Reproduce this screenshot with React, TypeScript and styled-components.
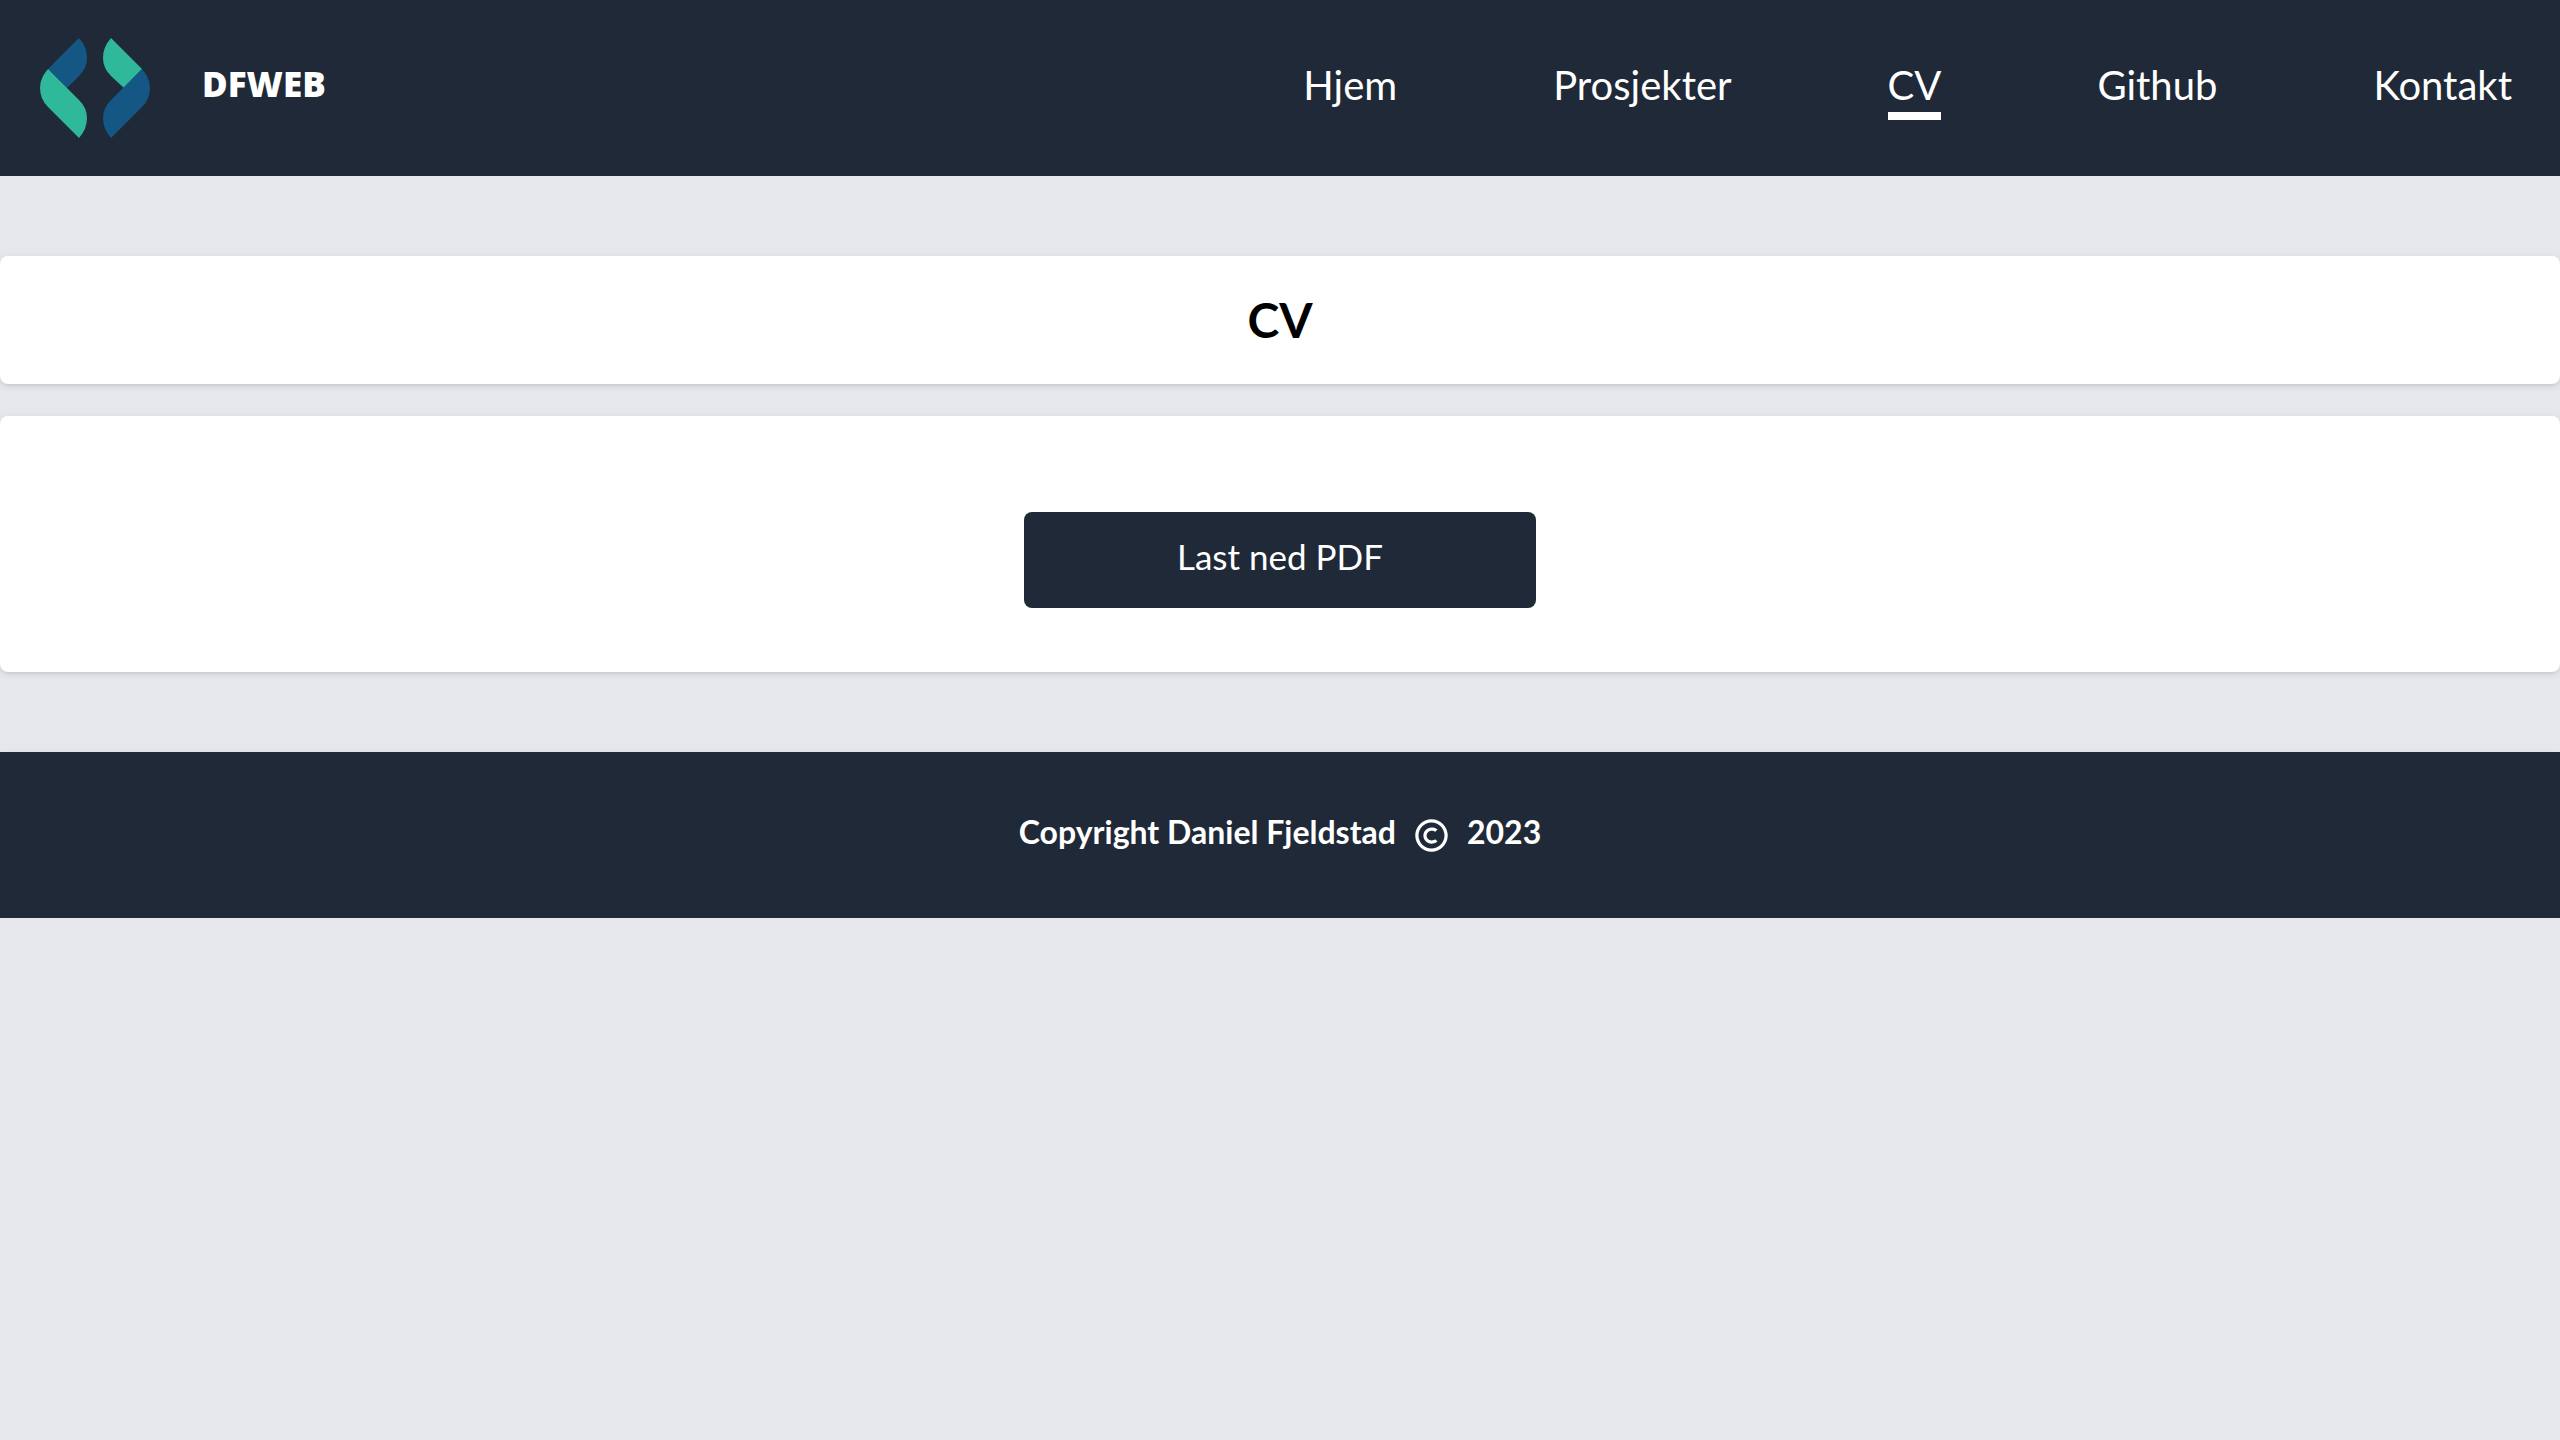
import React from "react";
import styled, { createGlobalStyle } from "styled-components";
import { BiCopyright } from "react-icons/bi";

const GlobalStyle = createGlobalStyle`
  *, *::before, *::after { box-sizing: border-box; }
  body {
    margin: 0;
    background: #e5e7eb;
    font-family: Lato, "Open Sans", sans-serif;
  }
`;

const Header = styled.header`
  display: flex;
  align-items: center;
  justify-content: space-between;
  height: 176px;
  padding: 0 48px 0 40px;
  background: #1f2937;
`;

const Brand = styled.a`
  display: flex;
  align-items: center;
  gap: 50px;
  color: #fff;
  text-decoration: none;
`;

const BrandName = styled.span`
  padding-bottom: 8px;
  font: 800 35px/40px "Open Sans", Lato, sans-serif;
`;

const Nav = styled.nav`
  display: flex;
  gap: 156px;
`;

const NavLink = styled.a<{ $active?: boolean }>`
  padding-top: 2px;
  border-bottom: 8px solid ${(p) => (p.$active ? "#fff" : "transparent")};
  color: #fff;
  font-size: 40px;
  line-height: 54px;
  text-decoration: none;
`;

const Main = styled.main`
  display: flex;
  flex-direction: column;
  gap: 32px;
  padding: 80px 0;
`;

const Card = styled.section<{ $pad: string }>`
  display: flex;
  justify-content: center;
  padding: ${(p) => p.$pad};
  border-radius: 8px;
  background: #fff;
  box-shadow: 0 2px 6px rgba(0, 0, 0, 0.1), 0 2px 4px -2px rgba(0, 0, 0, 0.1);
`;

const Title = styled.h1`
  margin: 0;
  color: #000;
  font-size: 48px;
  font-weight: 700;
  line-height: 64px;
`;

const Download = styled.button`
  width: 20%;
  padding: 16px 32px 24px;
  border: 0;
  border-radius: 8px;
  background: #1f2937;
  color: #fff;
  font-family: inherit;
  font-size: 35px;
  line-height: 56px;
`;

const Footer = styled.footer`
  display: flex;
  justify-content: center;
  align-items: center;
  gap: 16px;
  padding: 56px 32px 62px;
  background: #1f2937;
  box-shadow: 0 2px 6px rgba(0, 0, 0, 0.1), 0 2px 4px -2px rgba(0, 0, 0, 0.1);
  color: #fff;
  font-size: 32px;
  font-weight: 700;
  line-height: 48px;

  svg {
    margin-top: 6px;
  }
`;

const links = ["Hjem", "Prosjekter", "CV", "Github", "Kontakt"];

const Logo = () => (
  <svg width="112" height="100" viewBox="0 0 112 100" aria-hidden="true">
    <path d="M39 0Q47 9 47 20Q47 30 39 38L27 50L8 31Z" fill="#145684" />
    <path d="M8 31L39 62Q47 70 47 80Q47 91 39 100L8 69Q0 61 0 50Q0 40 8 31Z" fill="#2fb89a" />
    <path d="M71 0Q63 9 63 20Q63 30 71 38L84 50L102 31Z" fill="#2fb89a" />
    <path d="M102 31L71 62Q63 70 63 80Q63 91 71 100L102 69Q110 61 110 50Q110 40 102 31Z" fill="#145684" />
  </svg>
);

export default function App() {
  return (
    <>
      <GlobalStyle />
      <Header>
        <Brand href="#">
          <Logo />
          <BrandName>DFWEB</BrandName>
        </Brand>
        <Nav>
          {links.map((label) => (
            <NavLink key={label} href="#" $active={label === "CV"}>
              {label}
            </NavLink>
          ))}
        </Nav>
      </Header>
      <Main>
        <Card $pad="32px">
          <Title>CV</Title>
        </Card>
        <Card $pad="96px 0 64px">
          <Download type="button">Last ned PDF</Download>
        </Card>
      </Main>
      <Footer>
        <span>Copyright Daniel Fjeldstad</span>
        <BiCopyright size={39} />
        <span>2023</span>
      </Footer>
    </>
  );
}
